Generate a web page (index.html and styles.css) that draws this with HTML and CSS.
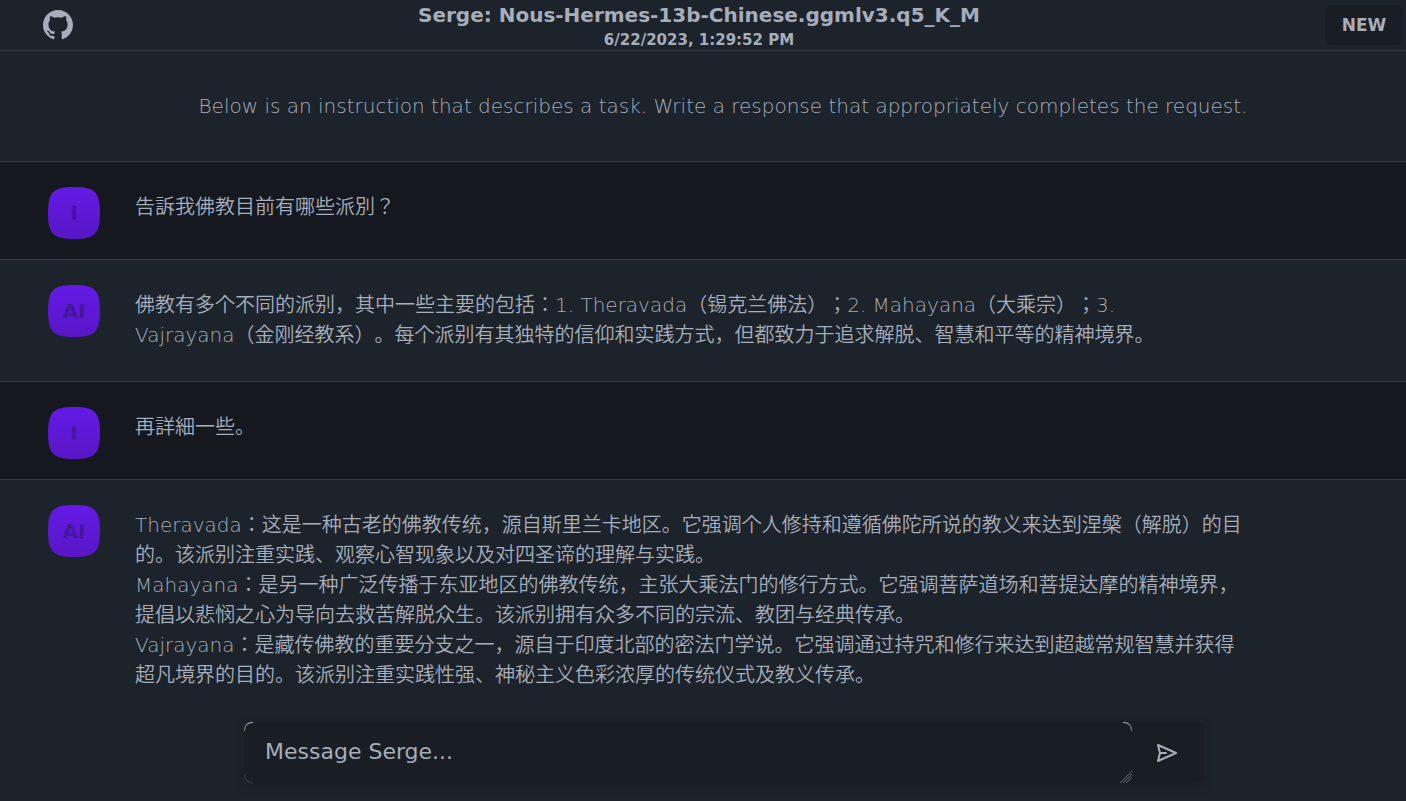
FILE: index.html
```html
<!DOCTYPE html>
<html lang="en">
<head>
  <meta charset="UTF-8" />
  <meta name="viewport" content="width=device-width, initial-scale=1.0"/>
  <title>Serge</title>
  <link rel="stylesheet" href="styles.css">
</head>
<body>

  <!-- shared avatar paint -->
  <svg class="defs" width="0" height="0" aria-hidden="true">
    <defs>
      <linearGradient id="violet" x1="0" y1="0" x2="0" y2="1">
        <stop offset="0" stop-color="#641ae6"/>
        <stop offset="1" stop-color="#5816c4"/>
      </linearGradient>
      <pattern id="speckle" width="5" height="7" patternUnits="userSpaceOnUse">
        <rect width="5" height="7" fill="#4313a0" fill-opacity="0.6"/>
        <path d="M0 0h1v1h-1zM2 1h1v1h-1zM4 2h1v1h-1zM1 3h1v1h-1zM3 4h1v1h-1zM0 5h1v1h-1zM2 6h1v1h-1z" fill="#1d0b50"/>
      </pattern>
    </defs>
  </svg>

  <header class="topbar">
    <a class="github" href="#" aria-label="GitHub">
      <svg width="30" height="30" viewBox="0 0 16 16" fill="currentColor">
        <path d="M8 0C3.58 0 0 3.58 0 8c0 3.54 2.29 6.53 5.47 7.59.4.07.55-.17.55-.38 0-.19-.01-.82-.01-1.49-2.01.37-2.53-.49-2.69-.94-.09-.23-.48-.94-.82-1.13-.28-.15-.68-.52-.01-.53.63-.01 1.08.58 1.23.82.72 1.21 1.87.87 2.33.66.07-.52.28-.87.51-1.07-1.78-.2-3.64-.89-3.64-3.95 0-.87.31-1.59.82-2.15-.08-.2-.36-1.02.08-2.12 0 0 .67-.21 2.2.82.64-.18 1.32-.27 2-.27s1.36.09 2 .27c1.53-1.04 2.2-.82 2.2-.82.44 1.1.16 1.92.08 2.12.51.56.82 1.27.82 2.15 0 3.07-1.87 3.75-3.65 3.95.29.25.54.73.54 1.48 0 1.07-.01 1.93-.01 2.2 0 .21.15.46.55.38A8.01 8.01 0 0 0 16 8c0-4.42-3.58-8-8-8z"/>
      </svg>
    </a>
    <div class="heading">
      <h1>Serge: Nous-Hermes-13b-Chinese.ggmlv3.q5_K_M</h1>
      <p>6/22/2023, 1:29:52 PM</p>
    </div>
    <button class="new-chat" type="button">NEW</button>
  </header>

  <main>
    <p class="prompt">Below is an instruction that describes a task. Write a response that appropriately completes the request.</p>

    <section class="message user">
      <svg class="avatar" viewBox="0 0 200 200">
        <path d="M100 0C20 0 0 20 0 100s20 100 100 100 100-20 100-100S180 0 100 0Z" fill="url(#violet)"/>
        <g transform="scale(3.846)"><text x="26" y="33">I</text></g>
      </svg>
      <div class="text">告訴我佛教目前有哪些派別？</div>
    </section>

    <section class="message">
      <svg class="avatar" viewBox="0 0 200 200">
        <path d="M100 0C20 0 0 20 0 100s20 100 100 100 100-20 100-100S180 0 100 0Z" fill="url(#violet)"/>
        <g transform="scale(3.846)"><text x="26" y="33">AI</text></g>
      </svg>
      <div class="text">佛教有多个不同的派别，其中一些主要的包括：1. Theravada（锡克兰佛法）；2. Mahayana（大乘宗）；3. <span class="term">Vajrayana（金刚经教系）</span>。每个派别有其独特的信仰和实践方式，但都致力于追求解脱、智慧和平等的精神境界。</div>
    </section>

    <section class="message user">
      <svg class="avatar" viewBox="0 0 200 200">
        <path d="M100 0C20 0 0 20 0 100s20 100 100 100 100-20 100-100S180 0 100 0Z" fill="url(#violet)"/>
        <g transform="scale(3.846)"><text x="26" y="33">I</text></g>
      </svg>
      <div class="text">再詳細一些。</div>
    </section>

    <section class="message">
      <svg class="avatar" viewBox="0 0 200 200">
        <path d="M100 0C20 0 0 20 0 100s20 100 100 100 100-20 100-100S180 0 100 0Z" fill="url(#violet)"/>
        <g transform="scale(3.846)"><text x="26" y="33">AI</text></g>
      </svg>
      <div class="text">
        <p>Theravada：这是一种古老的佛教传统，源自斯里兰卡地区。它强调个人修持和遵循佛陀所说的教义来达到涅槃（解脱）的目的。该派别注重实践、观察心智现象以及对四圣谛的理解与实践。</p>
        <p>Mahayana：是另一种广泛传播于东亚地区的佛教传统，主张大乘法门的修行方式。它强调菩萨道场和菩提达摩的精神境界，提倡以悲悯之心为导向去救苦解脱众生。该派别拥有众多不同的宗流、教团与经典传承。</p>
        <p>Vajrayana：是藏传佛教的重要分支之一，源自于印度北部的密法门学说。它强调通过持咒和修行来达到超越常规智慧并获得超凡境界的目的。该派别注重实践性强、神秘主义色彩浓厚的传统仪式及教义传承。</p>
      </div>
    </section>
  </main>

  <div class="composer">
    <form>
      <div class="field">
        <textarea rows="1" placeholder="Message Serge..." aria-label="Message Serge"></textarea>
      </div>
      <button class="send" type="submit" aria-label="Send">
        <svg width="22" height="20" viewBox="0 0 22 20" fill="none" stroke="currentColor" stroke-width="2" stroke-linecap="round" stroke-linejoin="round">
          <path d="M2 2L20 10L2 18L4 10ZM4 10H10"/>
        </svg>
      </button>
    </form>
  </div>

</body>
</html>
```
FILE: styles.css
```css
* { box-sizing: border-box; }
body {
  margin: 0;
  min-height: 100vh;
  overflow: hidden;
  background: #1d232a;
  color: #a6adbb;
  font-family: "DejaVu Sans", "Noto Sans CJK JP", "Noto Sans CJK SC", sans-serif;
}
h1, p { margin: 0; }
button {
  border: none;
  background: #191e24;
  color: inherit;
  font-family: inherit;
  cursor: pointer;
}
.defs { position: absolute; }

.topbar {
  display: flex;
  align-items: flex-start;
  justify-content: space-between;
  height: 51px;
  border-bottom: 1px solid #373b42;
}
.github {
  width: 73px;
  padding: 10px 0 0 43px;
  color: inherit;
}
.github svg { display: block; }
.heading {
  text-align: center;
  font-weight: bold;
}
.heading h1 {
  font-size: 20px;
  line-height: 30px;
}
.heading p {
  font-size: 15px;
  line-height: 20px;
}
.new-chat {
  width: 78px;
  height: 40px;
  margin: 5px 3px 0 0;
  padding: 0;
  border-radius: 8px;
  font-size: 17px;
  font-weight: bold;
}

.prompt {
  padding: 40px 0 40px 40px;
  border-bottom: 1px solid #373b42;
  text-align: center;
  font-size: 20px;
  font-weight: 200;
  line-height: 30px;
}
.message {
  display: flex;
  gap: 35px;
  padding: 25px 11% 20px 48px;
  border-bottom: 1px solid #373b42;
}
.message:last-child { border-bottom: none; }
.user { background: #15181f; }
.avatar {
  flex: none;
  width: 52px;
  height: 52px;
}
.avatar text {
  fill: url(#speckle);
  font-family: "DejaVu Sans", sans-serif;
  font-size: 20px;
  font-weight: bold;
  text-anchor: middle;
}
.text {
  flex: 1;
  padding: 5px 0 11px;
  font-size: 20px;
  font-weight: 350;
  line-height: 30px;
  text-spacing-trim: space-all;
}
.user .text { padding-bottom: 0; }
.term { white-space: nowrap; }

.composer { padding-left: 42px; }
form {
  display: flex;
  width: 100%;
  max-width: 960px;
  margin: 0 auto;
  border-radius: 8px;
  background: #191e24;
  box-shadow: 0 4px 8px #1b2027;
}
.field {
  position: relative;
  flex: 1;
}
/* light rims on the two upper corners */
.field::before,
.field::after {
  content: "";
  position: absolute;
  top: 1px;
  width: 8px;
  height: 8px;
  border-top: 1px solid #a6adbb;
}
.field::before {
  left: 0;
  border-left: 1px solid #7d828c;
  border-top-left-radius: 8px;
}
.field::after {
  right: 0;
  border-right: 1px solid #7d828c;
  border-top-right-radius: 8px;
}
/* fainter rim at the lower left */
form { position: relative; }
form::before {
  content: "";
  position: absolute;
  z-index: 1;
  left: 0;
  bottom: 0;
  width: 8px;
  height: 8px;
  border-left: 1px solid #3b4047;
  border-bottom: 1px solid #3b4047;
  border-bottom-left-radius: 8px;
}
textarea {
  display: block;
  width: 100%;
  height: 62px;
  padding: 15px 21px 14px;
  border: none;
  border-radius: 8px;
  background: #191e24;
  color: inherit;
  font-family: inherit;
  font-size: 22px;
  line-height: 32px;
  resize: vertical;
}
textarea::placeholder { color: #a6adbb; }
textarea::-webkit-resizer {
  background: linear-gradient(135deg,
    transparent 58%, #6a6f77 58% 61%,
    transparent 61% 68%, #6a6f77 68% 71%,
    transparent 71% 78%, #6a6f77 78% 81%,
    transparent 81%);
}
.send {
  display: flex;
  align-items: center;
  justify-content: center;
  width: 72px;
  padding: 1px 2px 0 0;
  border-radius: 8px;
}
```
